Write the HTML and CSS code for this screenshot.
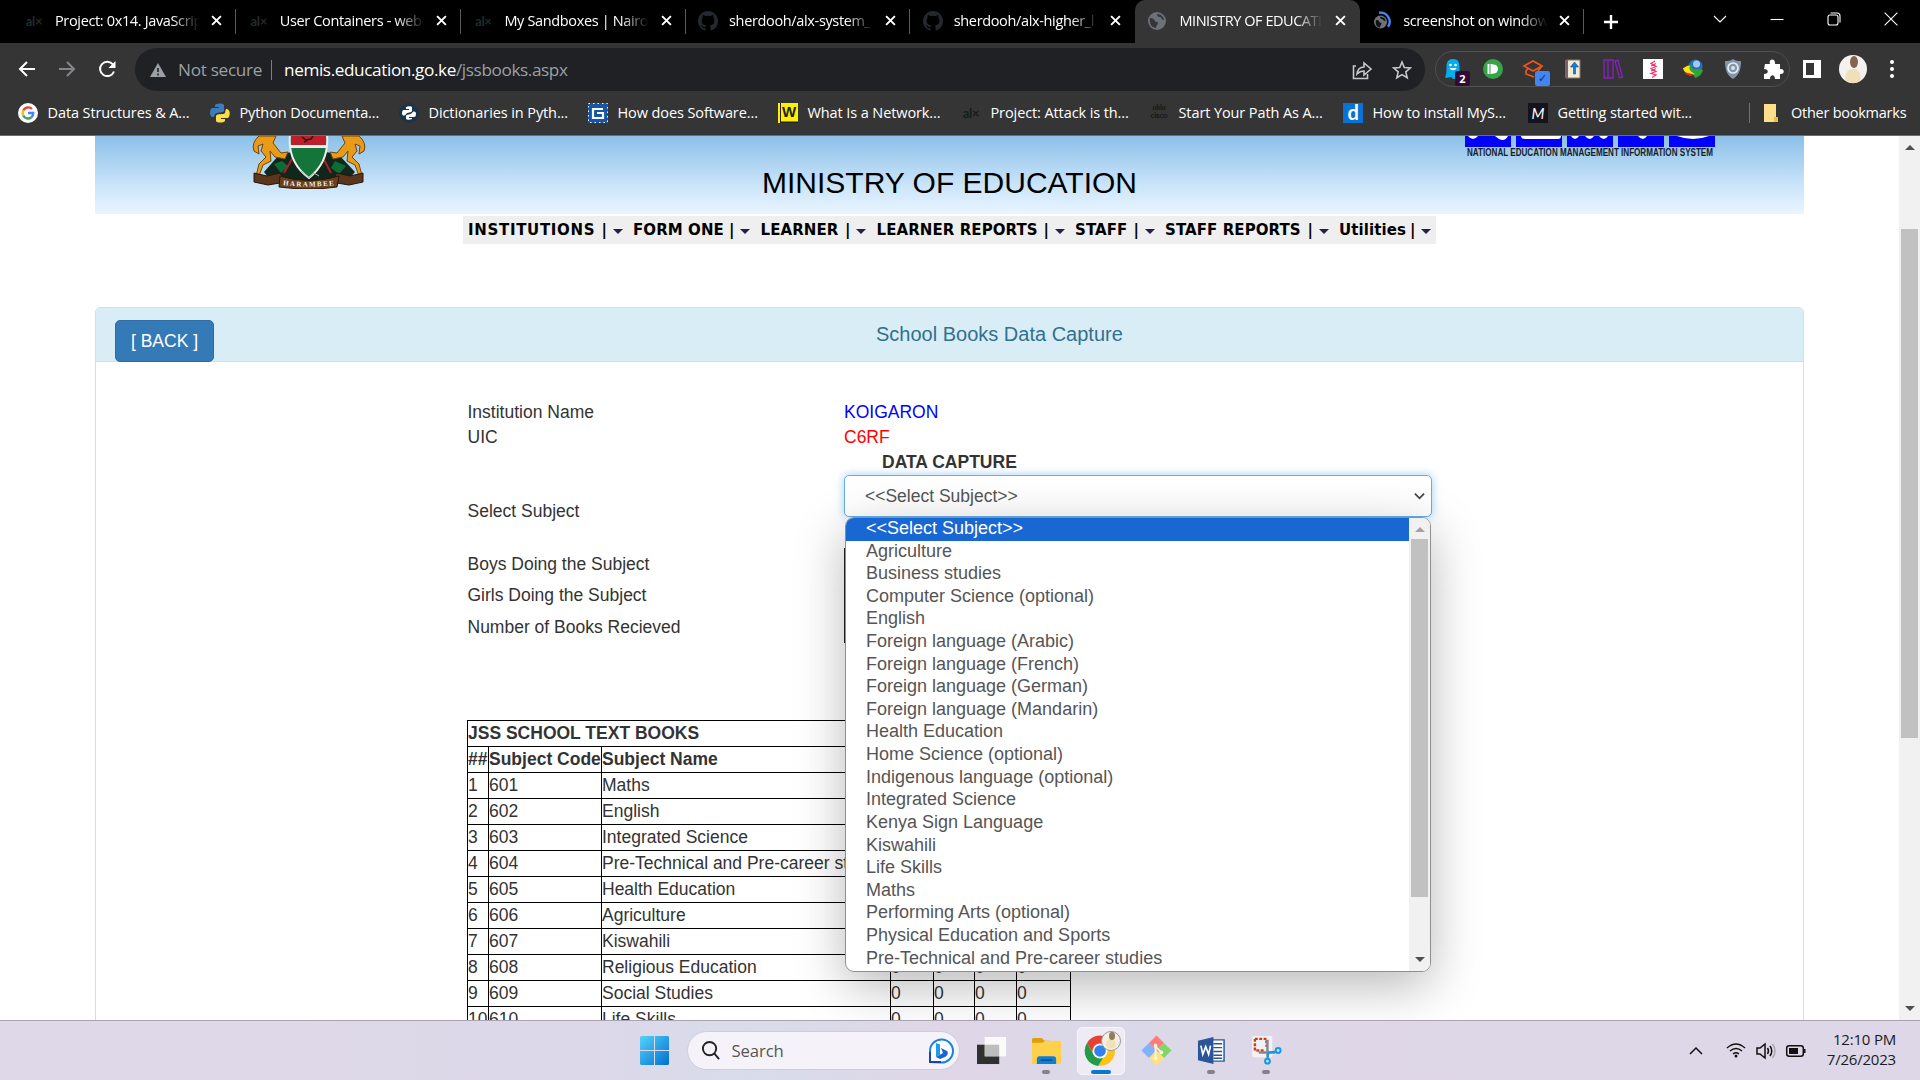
FILE: index.html
```html
<!DOCTYPE html>
<html lang="en">
<head>
<meta charset="utf-8">
<title>MINISTRY OF EDUCATION</title>
<link rel="stylesheet" href="styles.css">
</head>
<body>
<header class="browser">
  <div class="tabs">
    <div class="tab"><span class="fav alx">al×</span><span class="tab-title">Project: 0x14. JavaScrip</span><svg class="close" viewBox="0 0 10 10"><path d="M1 1l8 8M9 1l-8 8"/></svg></div>
    <div class="tab"><span class="fav alx">al×</span><span class="tab-title">User Containers - web-</span><svg class="close" viewBox="0 0 10 10"><path d="M1 1l8 8M9 1l-8 8"/></svg></div>
    <div class="tab"><span class="fav alx">al×</span><span class="tab-title">My Sandboxes | Nairo</span><svg class="close" viewBox="0 0 10 10"><path d="M1 1l8 8M9 1l-8 8"/></svg></div>
    <div class="tab"><svg class="fav" viewBox="0 0 16 16"><path fill="#24292f" d="M8 0C3.58 0 0 3.58 0 8c0 3.54 2.29 6.53 5.47 7.59.4.07.55-.17.55-.38v-1.49c-2.01.37-2.53-.49-2.69-.94-.09-.23-.48-.94-.82-1.13-.28-.15-.68-.52-.01-.53.63-.01 1.08.58 1.23.82.72 1.21 1.87.87 2.33.66.07-.52.28-.87.51-1.07-1.78-.2-3.64-.89-3.64-3.95 0-.87.31-1.59.82-2.15-.08-.2-.36-1.02.08-2.12 0 0 .67-.21 2.2.82a7.6 7.6 0 0 1 4 0c1.53-1.04 2.2-.82 2.2-.82.44 1.1.16 1.92.08 2.12.51.56.82 1.27.82 2.15 0 3.07-1.87 3.75-3.65 3.95.29.25.54.73.54 1.48v2.2c0 .21.15.46.55.38A8 8 0 0 0 16 8c0-4.42-3.58-8-8-8z"/></svg><span class="tab-title">sherdooh/alx-system_</span><svg class="close" viewBox="0 0 10 10"><path d="M1 1l8 8M9 1l-8 8"/></svg></div>
    <div class="tab before-active"><svg class="fav" viewBox="0 0 16 16"><path fill="#24292f" d="M8 0C3.58 0 0 3.58 0 8c0 3.54 2.29 6.53 5.47 7.59.4.07.55-.17.55-.38v-1.49c-2.01.37-2.53-.49-2.69-.94-.09-.23-.48-.94-.82-1.13-.28-.15-.68-.52-.01-.53.63-.01 1.08.58 1.23.82.72 1.21 1.87.87 2.33.66.07-.52.28-.87.51-1.07-1.78-.2-3.64-.89-3.64-3.95 0-.87.31-1.59.82-2.15-.08-.2-.36-1.02.08-2.12 0 0 .67-.21 2.2.82a7.6 7.6 0 0 1 4 0c1.53-1.04 2.2-.82 2.2-.82.44 1.1.16 1.92.08 2.12.51.56.82 1.27.82 2.15 0 3.07-1.87 3.75-3.65 3.95.29.25.54.73.54 1.48v2.2c0 .21.15.46.55.38A8 8 0 0 0 16 8c0-4.42-3.58-8-8-8z"/></svg><span class="tab-title">sherdooh/alx-higher_l</span><svg class="close" viewBox="0 0 10 10"><path d="M1 1l8 8M9 1l-8 8"/></svg></div>
    <div class="tab active"><svg class="fav" viewBox="0 0 20 20"><circle cx="10" cy="10" r="9" fill="#6d7278"/><path fill="#35363a" d="M3 7c3 0 4 1 5 3s3 0 3 2-2 2-2 5c-4 0-7-4-6-10zM10 3c0 2 1 3 3 3s1 3 4 3c0-3-3-6-7-6z"/></svg><span class="tab-title">MINISTRY OF EDUCATI</span><svg class="close" viewBox="0 0 10 10"><path d="M1 1l8 8M9 1l-8 8"/></svg></div>
    <div class="tab last"><svg class="fav" viewBox="0 0 20 20"><circle cx="8.500" cy="11" r="6.500" fill="#6d7278"/><path fill="#111" d="M4 9c2 0 3 .5 3.500 2s2 0 2 1.500-1.500 1.500-1.500 4c-3 0-5-3-4-7.500zM8 6c0 1.500 1 2 2 2s1 2 3.500 2c0-2-2-4.500-5.500-4z"/><path d="M7 1.800a9 9 0 0 1 9 14" fill="none" stroke="#4285f4" stroke-width="2.400"/></svg><span class="tab-title">screenshot on window</span><svg class="close" viewBox="0 0 10 10"><path d="M1 1l8 8M9 1l-8 8"/></svg></div>
    <svg class="newtab" viewBox="0 0 16 16"><path d="M8 1v14M1 8h14" stroke="#fff" stroke-width="2.400"/></svg>
    <div class="window-controls">
      <svg viewBox="0 0 14 14"><path d="M1 4l6 6 6-6"/></svg>
      <svg viewBox="0 0 14 14"><path d="M.5 7.500h13"/></svg>
      <svg viewBox="0 0 14 14"><rect x="1" y="3" width="10" height="10" rx="2"/><path d="M3.500 1h6.500a3 3 0 0 1 3 3v6.500"/></svg>
      <svg viewBox="0 0 14 14"><path d="M.6.600l12.800 12.800M13.400.6L.6 13.400"/></svg>
    </div>
  </div>
  <div class="toolbar">
    <svg class="nav-ic" viewBox="0 0 18 18"><path d="M17 9H2M9 2L2 9l7 7" stroke="#fff"/></svg>
    <svg class="nav-ic" viewBox="0 0 18 18"><path d="M1 9h15M9 2l7 7-7 7" stroke="#85868a"/></svg>
    <svg class="nav-ic" viewBox="0 0 18 18"><path d="M16 11.500A7.200 7.200 0 1 1 15 4.500" stroke="#fff"/><path d="M17.500 1v7h-7z" fill="#fff"/></svg>
    <div class="omnibox">
      <svg class="warn" viewBox="0 0 16 14"><path d="M8 0l8 14H0z" fill="#9aa0a6"/><path d="M8 5v4M8 10.500v2" stroke="#202124" stroke-width="1.600"/></svg>
      <span class="insecure">Not secure</span><i class="bar"></i>
      <span class="url"><b>nemis.education.go.ke</b>/jssbooks.aspx</span>
      <svg class="share" viewBox="0 0 20 20"><path d="M4 6H1.500v12.500h14V14M5 14c.5-4 3-7 7-7V3l7 6-7 6v-4c-3 0-5 1-7 3z"/></svg>
      <svg class="star" viewBox="0 0 20 20"><path d="M10 2l2.300 5.500 6 .5-4.500 3.900 1.400 5.900-5.200-3.200-5.200 3.200 1.400-5.900L1.700 8l6-.5z"/></svg>
    </div>
    <div class="extensions">
      <span class="ext"><svg viewBox="0 0 20 20"><path fill="#00aef0" d="M10 0c5 0 6.500 3 6.500 8 0 6 0 8 1 10-2 1-2.500-.5-3.500-.5S13 20 11 20s-2-2-4-2-3 2-5 0c1.500-3 1.500-5 1.500-10S5 0 10 0z"/><circle cx="7.500" cy="6" r="1.300" fill="#fff"/><circle cx="12.500" cy="6" r="1.300" fill="#fff"/><path d="M6.500 9c1 3 6 3 7 0z" fill="#fff"/></svg><em class="badge plum">2</em></span>
      <span class="ext"><svg viewBox="0 0 20 20"><circle cx="10" cy="10" r="10" fill="#37a34a"/><path d="M5.500 5v10M8.500 5v10" stroke="#fff" stroke-width="2"/><path d="M8.500 5.500h2a4.500 4.500 0 0 1 0 9h-2z" fill="#fff"/></svg></span>
      <span class="ext"><svg viewBox="0 0 20 20" fill="none" stroke="#f0551d" stroke-width="1.700"><path d="M1 7l9-5 9 5-9 5zM5 9.500L3 12v3l8 3M19 7l-4 5"/></svg><em class="badge blue">✓</em></span>
      <span class="ext"><svg viewBox="0 0 20 20"><path fill="#f3ead3" stroke="#8c756b" d="M3 1h14v18H3z"/><path fill="#80616a" d="M2 1h3v18H2z"/><path d="M11.500 3l4 5h-3v7h-2V8h-3z" fill="#127dda" stroke="#174e83" stroke-width=".6"/></svg></span>
      <span class="ext"><svg viewBox="0 0 20 20" fill="none" stroke="#8b20c2" stroke-width="1.300"><path d="M1 1h4v18H1zM5 1h5v18H5zM12 2l3-.8 4.500 16.800-3 .8z"/></svg></span>
      <span class="ext"><svg viewBox="0 0 20 20"><path fill="#fff" d="M0 0h20v20H0z"/><path d="M12 2L8 4.500l5 3-5 2 5 3-5 2 5 1.500-4 2.500M8 7l5-2.500M8 12l5-2.500" fill="none" stroke="#f0346c" stroke-width="1.300"/></svg></span>
      <span class="ext"><svg viewBox="0 0 20 20"><circle cx="12.500" cy="7.500" r="7" fill="#286eb6"/><circle cx="13.500" cy="5" r="3.500" fill="#a5c8ec"/><path d="M4 7c1 5 4 5 6 8l2 4c4-1 7-4 8-8-5-2-11 2-12-5z" fill="#2fa538"/><path d="M0 9c3 0 3-3 7-2-2 3 1 6 5 8-6 2-11-1-12-6z" fill="#ffe11a"/><path d="M1 12c2 2 5 2.500 9 3l-1 2c-4 0-7-2-8-5z" fill="#d72d20"/></svg></span>
      <span class="ext"><svg viewBox="0 0 20 20"><path d="M10 0c3 2 5 2 8 2 0 9-2 14-8 18C4 16 2 11 2 2c3 0 5 0 8-2z" fill="#8395a8"/><circle cx="10" cy="9" r="5" fill="none" stroke="#e5edf5" stroke-width="1.700"/><circle cx="10" cy="9" r="2" fill="#d8e3ee"/></svg></span>
      <span class="ext"><svg viewBox="0 0 20 20"><path fill="#fff" d="M2 5h5c-2-6 6-6 5 0h5v5c5-1 5 6 0 5v5h-5c0-5-5-5-5 0H1v-5c5 0 5-5 0-5z"/></svg></span>
    </div>
    <svg class="side" viewBox="0 0 18 18"><path d="M1.500 1.500h15v15h-15z" fill="none" stroke="#fff" stroke-width="3"/><path d="M11 1h6v16h-6z" fill="#fff"/></svg>
    <svg class="avatar" viewBox="0 0 28 28"><circle cx="14" cy="14" r="14" fill="#f4f1ee"/><path d="M7 26c-2-8 2-12 7-12s9 4 7 12c-4 3-10 3-14 0z" fill="#eee0b9"/><ellipse cx="15" cy="7" rx="4" ry="6" fill="#85654f"/></svg>
    <svg class="dots" viewBox="0 0 4 18"><circle cx="2" cy="2" r="2"/><circle cx="2" cy="9" r="2"/><circle cx="2" cy="16" r="2"/></svg>
  </div>
  <div class="bookmarks">
    <span class="bm"><svg viewBox="0 0 20 20"><circle cx="10" cy="10" r="10" fill="#fff"/><g fill="none" stroke-width="2.400"><path d="M14 6a5.500 5.500 0 0 0-8.800 1.500" stroke="#ea4335"/><path d="M5.200 7.500a5.500 5.500 0 0 0 0 5" stroke="#fbbc05"/><path d="M5.200 12.500a5.500 5.500 0 0 0 8 2" stroke="#34a853"/><path d="M13.200 14.500a5.500 5.500 0 0 0 2-4.500H10" stroke="#4285f4"/></g></svg>Data Structures &amp; A...</span>
    <span class="bm"><svg viewBox="0 0 20 20"><path fill="#3c7ebb" d="M5 2c2-2 8-2 9 0v6c0 2-8 1-9 3-1 3-1 3-3 3-3-2-2-8 0-9h7V4H5z"/><path fill="#ffdc4a" d="M15 18c-2 2-8 2-9 0v-5c1-3 8-1 9-3 1-3 0-4 2-4 4 1 3 8 1 9h-7v1h4z"/></svg>Python Documenta...</span>
    <span class="bm"><svg viewBox="0 0 20 20"><circle cx="10" cy="10" r="10" fill="#1c3448"/><path d="M7 4c2-1 5-1 6 0v4c0 2-5 1-6 3-1 2-3 2-4 0 0-4 1-4 3-4h4V6H7zM13 16c-2 1-5 1-6 0v-3c0-2 5-1 6-3 1-2 3-2 4 0 0 4-1 4-3 4h-4v1h3z" fill="#fff"/></svg>Dictionaries in Pyth...</span>
    <span class="bm"><svg viewBox="0 0 20 20"><path fill="#1656a7" d="M0 0h20v20H0z"/><path d="M.5.5h19v19H.5z" fill="none" stroke="#fff" stroke-dasharray="1.500 3"/><path d="M15 6H5v9h10v-5H9" fill="none" stroke="#fff" stroke-width="2.200"/></svg>How does Software...</span>
    <span class="bm"><i class="logo yellow">W</i>What Is a Network...</span>
    <span class="bm"><i class="logo alx dark">al×</i>Project: Attack is th...</span>
    <span class="bm"><i class="logo cisco">ıılılıı<br>cisco</i>Start Your Path As A...</span>
    <span class="bm"><i class="logo digital">d</i>How to install MyS...</span>
    <span class="bm"><i class="logo mm">M</i>Getting started wit...</span>
    <i class="bm-sep"></i>
    <span class="bm"><svg viewBox="0 0 20 20"><path fill="#ffe08a" d="M3 1h12v13h2v5H3z"/><path fill="#ecbc45" d="M13 14h4v5h-4z"/></svg>Other bookmarks</span>
  </div>
</header>

<div class="viewport">
  <main class="page">
    <div class="banner">
      <svg class="crest" viewBox="0 0 116 53"><path d="M13 36L28 19q30-9 60 0l16 17-8 9H20z" fill="#12271c"/><g fill="#e79b19" stroke="#70430b" stroke-width="1"><path d="M8 0h17l-3 7 8 10 7-1-3 7-10-2-5-6 1 10-8 4-4 11H5l3-12 7-7-5-6 2-7-5 2 1 8-5-3q-3-8 5-15z"/><path d="M108 0H91l3 7-8 10-7-1 3 7 10-2 5-6-1 10 8 4 4 11h3l-3-12-7-7 5-6-2-7 5 2-1 8 5-3q3-8-5-15z"/></g><path d="M23 28l8-3 6 5-7 7zM84 25l11 5-7 8-8-6z" fill="#0c6c35"/><path d="M33 37l24-42M80 37L58-5" stroke="#b11d2b" stroke-width="2"/><path d="M39-1h37c2 22-8 35-18 43C47 34 37 20 39-1z" fill="#14753a" stroke="#eee" stroke-width="2"/><path d="M40-1h35v10H40z" fill="#bd1f2b"/><path d="M40 9h36v3H40z" fill="#eee"/><path d="M51 1l4 3 5-1 2-3M53 6l4-2" fill="none" stroke="#301319" stroke-width="1.500"/><path d="M50 35l8 7 5-5 5 3" stroke="#bbb" fill="none"/><path d="M3 37l13 3 13-3 6 9-18 3-14-3zM112 37l-13 3-13-3-6 9 18 3 14-3z" fill="#5b351c" stroke="#281608"/><path d="M29 40q29 9 59 0l-2 11q-27 4-58 0z" fill="#68401f" stroke="#281608"/><path id="ribbon" d="M32 49q26 3 53 0" fill="none"/><text class="motto"><textPath href="#ribbon" textLength="51">HARAMBEE</textPath></text></svg>
      <h1>MINISTRY OF EDUCATION</h1>
      <svg class="nemis" viewBox="0 0 250 22"><g fill="#00f"><path d="M0 0h46v11H0zM51 0h46v11H51zM102 0h46v11h-46zM153 0h46v11h-46zM204 0h46v11h-46z"/></g><g fill="#fff"><path d="M3 0h10q-5 6-10 0zM30 0h13q-3 6-9 3zM56 0h40q0 3-3 3H60q-4 0-4-3zM106 0h8q-4 6-8 0zM120 0h9q-4 6-9 0zM134 0h9q-4 6-9 0zM173 0h9q-4 6-9 0zM212 0h32q-16 6-32 0z"/></g><text x="2" y="20" textLength="246" lengthAdjust="spacingAndGlyphs">NATIONAL EDUCATION MANAGEMENT INFORMATION SYSTEM</text></svg>
    </div>
    <nav class="menu">
      <a class="institutions"><span>INSTITUTIONS</span><span>|</span><i></i></a><a><span>FORM ONE</span><span>|</span><i></i></a><a><span>LEARNER</span><span>|</span><i></i></a><a><span>LEARNER REPORTS</span><span>|</span><i></i></a><a><span>STAFF</span><span>|</span><i></i></a><a><span>STAFF REPORTS</span><span>|</span><i></i></a><a class="utilities"><span>Utilities</span><span>|</span><i></i></a>
    </nav>
    <section class="panel">
      <div class="panel-head"><button class="back">[ BACK ]</button><h2>School Books Data Capture</h2></div>
      <div class="panel-body">
        <div class="form">
          <div class="row"><label>Institution Name</label><span class="name">KOIGARON</span></div>
          <div class="row"><label>UIC</label><span class="uic">C6RF</span></div>
          <div class="row"><label></label><strong class="caption">DATA CAPTURE</strong></div>
          <div class="row select-row"><label>Select Subject</label>
            <div class="select"><span>&lt;&lt;Select Subject&gt;&gt;</span><svg viewBox="0 0 12 8"><path d="M1 1.500l5 5 5-5"/></svg>
              <div class="dropdown">
                <ul>
                  <li class="selected">&lt;&lt;Select Subject&gt;&gt;</li><li>Agriculture</li><li>Business studies</li><li>Computer Science (optional)</li><li>English</li><li>Foreign language (Arabic)</li><li>Foreign language (French)</li><li>Foreign language (German)</li><li>Foreign language (Mandarin)</li><li>Health Education</li><li>Home Science (optional)</li><li>Indigenous language (optional)</li><li>Integrated Science</li><li>Kenya Sign Language</li><li>Kiswahili</li><li>Life Skills</li><li>Maths</li><li>Performing Arts (optional)</li><li>Physical Education and Sports</li><li>Pre-Technical and Pre-career studies</li>
                </ul>
                <div class="scroll inner"><i class="up"></i><b></b><i class="down"></i></div>
              </div>
            </div>
          </div>
          <div class="row field"><label>Boys Doing the Subject</label><span class="input"></span></div>
          <div class="row field"><label>Girls Doing the Subject</label><span class="input"></span></div>
          <div class="row field last-field"><label>Number of Books Recieved</label><span class="input"></span></div>
        </div>
        <table class="books">
          <colgroup><col class="c-no"><col class="c-code"><col class="c-name"><col class="c-a"><col class="c-b"><col class="c-c"><col class="c-d"></colgroup>
          <tr><th colspan="7">JSS SCHOOL TEXT BOOKS</th></tr>
          <tr><th>##</th><th>Subject Code</th><th>Subject Name</th><th></th><th></th><th></th><th></th></tr>
          <tr><td>1</td><td>601</td><td>Maths</td><td></td><td></td><td></td><td></td></tr>
          <tr><td>2</td><td>602</td><td>English</td><td></td><td></td><td></td><td></td></tr>
          <tr><td>3</td><td>603</td><td>Integrated Science</td><td></td><td></td><td></td><td></td></tr>
          <tr><td>4</td><td>604</td><td>Pre-Technical and Pre-career studies</td><td></td><td></td><td></td><td></td></tr>
          <tr><td>5</td><td>605</td><td>Health Education</td><td></td><td></td><td></td><td></td></tr>
          <tr><td>6</td><td>606</td><td>Agriculture</td><td></td><td></td><td></td><td></td></tr>
          <tr><td>7</td><td>607</td><td>Kiswahili</td><td></td><td></td><td></td><td></td></tr>
          <tr><td>8</td><td>608</td><td>Religious Education</td><td>0</td><td>0</td><td>0</td><td>0</td></tr>
          <tr><td>9</td><td>609</td><td>Social Studies</td><td>0</td><td>0</td><td>0</td><td>0</td></tr>
          <tr><td>10</td><td>610</td><td>Life Skills</td><td>0</td><td>0</td><td>0</td><td>0</td></tr>
        </table>
      </div>
    </section>
  </main>
  <div class="scroll outer"><i class="up"></i><b></b><i class="down"></i></div>
</div>

<footer class="taskbar">
  <div class="apps">
    <svg class="start" viewBox="0 0 29 29"><defs><linearGradient id="win" x1="0" y1="0" x2="1" y2="1"><stop stop-color="#55d3fb"/><stop offset="1" stop-color="#0070d0"/></linearGradient></defs><path fill="url(#win)" d="M1 0h13v14H0V1zM15 0h13l1 1v13H15zM0 15h14v14H1l-1-1zM15 15h14v13l-1 1H15z"/></svg>
    <div class="search"><svg class="mag" viewBox="0 0 20 20"><circle cx="9" cy="8" r="7"/><path d="M14 13l5 6"/></svg><span>Search</span><svg class="bing" viewBox="0 0 26 26"><path d="M2 24V13A11.500 11.500 0 1 1 13 24.500z" fill="#fff" stroke="#1684e0" stroke-width="2"/><path d="M2 14v10h11" fill="none" stroke="#1b41b5" stroke-width="2"/><path d="M8 5l4 1.500v10L8 19z" fill="#1e9bea"/><path d="M13 10l6 3c2 2 0 5-2 6l-5 2-4-2 7-4z" fill="#1764d2"/></svg></div>
    <span class="app"><svg viewBox="0 0 30 30"><path fill="#30302f" d="M0 9h23v20H0z"/><path fill="#fafafa" d="M8 1h22v20H8z"/><path fill="#bdbdbd" d="M8 9h15v12H8z"/></svg></span>
    <span class="app run"><svg viewBox="0 0 30 30"><path fill="#dda009" d="M1 2h9l3 3h5v5H0V3z"/><path fill="#ffd04b" d="M0 7h11l3-2h15l1 1v23H0z"/><path fill="#117dd4" d="M5 29v-5q0-3 3-3h14q3 0 3 3v5z"/><path stroke="#064f92" stroke-width="1.500" d="M9 25h12"/></svg></span>
    <span class="app current"><svg viewBox="0 0 36 36"><circle cx="15" cy="20" r="15" fill="#fcc419"/><path fill="#e44235" d="M2 12a15 15 0 0 1 26 0l-13 1-6 10z"/><path fill="#249b4b" d="M2 12l7 12 9 3-5 8A15 15 0 0 1 2 12z"/><circle cx="15" cy="20" r="7.500" fill="#fff"/><circle cx="15" cy="20" r="5.800" fill="#347fed"/><circle cx="26" cy="10" r="9.500" fill="#f3eee2" stroke="#999"/><path d="M21 15q0-7 5-7t5 7q-5 5-10 0z" fill="#efe2b4"/><ellipse cx="27" cy="5" rx="3" ry="4" fill="#93795f"/></svg></span>
    <span class="app"><svg viewBox="0 0 30 30"><g transform="rotate(45 15 15)"><path fill="#7eb4fa" d="M4 15h11v11H4z"/><path fill="#ff7b79" d="M4 4h11v11H4z"/><path fill="#82d567" d="M15 4h11v11H15z"/><path fill="#ffe378" d="M15 15h11v11H15z"/></g><path d="M14 8v16M14 11l6 6" stroke="#f7f2dd" stroke-width="2"/><circle cx="14" cy="10" r="2" fill="#f7f2dd"/><circle cx="20" cy="17" r="2" fill="#f7f2dd"/><circle cx="14" cy="23" r="2" fill="#f7f2dd"/></svg></span>
    <span class="app run"><svg viewBox="0 0 30 30"><path fill="#fff" stroke="#2a5699" stroke-width="1.500" d="M14 4h14v22H14z"/><path d="M17 8h9M17 12h9M17 16h9M17 20h9M17 23h9" stroke="#2a5699" stroke-width="1.500"/><path fill="#2a5699" d="M1 5l16-4v28L1 25z"/><path d="M4 10l2 9 3-8 3 8 2-9" fill="none" stroke="#fff" stroke-width="1.700"/></svg></span>
    <span class="app run"><svg viewBox="0 0 30 30"><rect width="21" height="22" fill="#f2f2f4" rx="2"/><path d="M3 3h12v8M3 3v12h9" fill="none" stroke="#d33c13" stroke-width="2.500" stroke-dasharray="3 1.500"/><path d="M16 4v18M7 17h17" stroke="#7f8995" stroke-width="2.500"/><g fill="none" stroke="#1199e6" stroke-width="2"><circle cx="27" cy="15" r="2.500"/><circle cx="16" cy="26" r="2.500"/><path d="M17 17l8-1M17 18l-1 6"/></g></svg></span>
  </div>
  <div class="tray">
    <svg class="chev" viewBox="0 0 14 8"><path d="M1 7l6-6 6 6"/></svg>
    <svg class="wifi" viewBox="0 0 20 15"><path d="M1 5q9-8 18 0M4 8q6-5 12 0M7 11q3-2.500 6 0"/><circle cx="10" cy="13" r="1.500" fill="#111" stroke="none"/></svg>
    <svg class="volume" viewBox="0 0 20 16"><path d="M1 5h3l5-4v14l-5-4H1zM11.500 5q2 3 0 6M14 3q3.500 5 0 10"/><path d="M16.500 1q5 7 0 14" stroke="#aaa3b1"/></svg>
    <svg class="battery" viewBox="0 0 20 12"><rect x=".7" y=".7" width="16.600" height="10.600" rx="2.500"/><path d="M3 3h9v6H3z" fill="#111" stroke="none"/><path d="M18.800 4v4"/></svg>
    <div class="clock">12:10 PM<br>7/26/2023</div>
  </div>
</footer>
</body>
</html>
```
FILE: styles.css
```css
* { box-sizing: border-box; }
body { margin: 0; width: 1920px; height: 1080px; overflow: hidden; display: flex; flex-direction: column; background: #fff; font-family: "Liberation Sans", Arial, sans-serif; font-size: 17.5px; line-height: 25px; color: #333; }
svg { display: block; flex: none; overflow: visible; }
i, em { font-style: normal; }

/* Browser chrome */
.browser { height: 136px; flex: none; background: #353535; color: #fff; font-family: "Open Sans", "Noto Sans", sans-serif; border-bottom: 1px solid #6b6b6b; }
.tabs { height: 43px; background: #000; display: flex; align-items: center; padding-left: 11.500px; }
.tab { width: 224.700px; height: 43px; display: flex; align-items: center; padding: 0 14px 2px 12.500px; position: relative; flex: none; }
.tab::after { content: ""; position: absolute; right: 0; top: 9px; width: 1px; height: 25px; background: #5a5a5a; }
.before-active::after, .active::after { display: none; }
.tab.active { background: #353535; border-radius: 10px 10px 0 0; }
.fav { width: 20px; height: 20px; flex: none; }
.alx { font: bold 13px/20px Lato, sans-serif; color: #222b2c; letter-spacing: -.3px; text-align: center; }
.tab-title { flex: none; width: 146px; margin-left: 11px; font-size: 14.500px; letter-spacing: -.35px; white-space: nowrap; overflow: hidden; -webkit-mask-image: linear-gradient(90deg, #000 80%, transparent 99%); mask-image: linear-gradient(90deg, #000 80%, transparent 99%); }
.active .tab-title { letter-spacing: -.45px; margin-left: 12px; width: 145px; }
.close { width: 11px; height: 11px; margin-left: auto; fill: none; stroke: #fff; stroke-width: 1.800; }
.newtab { width: 16px; height: 16px; margin-left: 19px; }
.window-controls { display: flex; gap: 43px; margin-left: 94px; padding-bottom: 6px; }
.window-controls svg { width: 14px; height: 14px; fill: none; stroke: #fff; stroke-width: 1.100; }

.toolbar { height: 48px; padding: 5px 0 0 18px; display: flex; align-items: center; }
.nav-ic { width: 18px; height: 18px; margin: -1px 22px 0 0; fill: none; stroke-width: 2; }
.nav-ic:nth-child(3) { margin-right: 19px; }
.omnibox { width: 1290px; height: 43px; flex: none; border-radius: 22px; background: #202124; display: flex; align-items: center; padding: 0 13px 0 15px; font-size: 17.200px; margin-right: 10px; }
.warn { width: 16px; height: 14px; }
.insecure { color: #9aa0a6; width: 83px; margin-left: 12px; white-space: nowrap; letter-spacing: -.3px; }
.bar { width: 1px; height: 20px; background: #7b7d81; margin: 0 12px 0 10px; }
.url { color: #9aa0a6; letter-spacing: -.4px; }
.url b { color: #fff; font-weight: 400; }
.share, .star { width: 20px; height: 20px; fill: none; stroke: #c5c7c9; stroke-width: 1.600; }
.share { margin-left: auto; }
.star { margin-left: 20px; }
.extensions { width: 355px; height: 36px; margin-top: -2px; border: 1px solid #505050; border-radius: 18px; display: flex; align-items: center; gap: 20px; padding-left: 7px; flex: none; }
.ext { width: 20px; height: 20px; position: relative; flex: none; }
.ext svg { width: 20px; height: 20px; }
.badge { position: absolute; left: 12px; top: 12px; width: 15px; height: 15px; border-radius: 2px; font: bold 11px/15px "Open Sans", sans-serif; text-align: center; }
.plum { background: #330a35; }
.blue { background: #4285f4; font-family: "DejaVu Sans"; color: #182a52; }
.side { width: 18px; height: 18px; margin: -1px 0 0 13px; }
.avatar { width: 28px; height: 28px; margin: -1px 0 0 18px; }
.dots { width: 4px; height: 18px; margin: -1px 0 0 23px; fill: #fff; }

.bookmarks { height: 44px; padding: 0 0 1px 18px; display: flex; align-items: center; font-size: 14.500px; letter-spacing: -.1px; white-space: nowrap; }
.bm { display: flex; align-items: center; gap: 9.500px; flex: none; width: 189px; }
.bm svg, .logo { width: 20px; height: 20px; flex: none; }
.bm:nth-child(1) { width: 192px; }
.bm:nth-child(4) { width: 190px; }
.bm:nth-child(5) { width: 183px; }
.bm:nth-child(6) { width: 188px; }
.bm:nth-child(7) { width: 194px; }
.bm:nth-child(8) { width: 185px; }
.bm:nth-child(9) { width: 221px; }
.bm:last-child { width: 150px; gap: 10px; letter-spacing: -.25px; }
.bm-sep { width: 1px; height: 20px; background: #707070; margin-right: 11px; }
.logo { text-align: center; }
.dark { color: #141d1e; }
.yellow { background: #fff000; color: #222; font: bold 15px/18px "Liberation Sans"; border-left: 2px solid #fff000; box-shadow: inset 1.500px -2px 0 -.5px #222; }
.cisco { font: bold 8px/8px Lato; color: #141819; letter-spacing: -.2px; }
.digital { background: #0873d4; font: bold 20px/18px Lato; }
.mm { background: #14141e; font: italic 15px/20px Lato; }

/* Web page */
.viewport { flex: 1; min-height: 0; display: flex; overflow: hidden; }
.page { flex: 1; padding: 0 95px; width: 1899px; }
.banner { width: 1709px; height: 78px; background: linear-gradient(#8bc0e8, #cce5fa 65%, #eaf5ff); display: flex; padding-left: 156px; overflow: hidden; }
.crest { width: 116px; height: 53px; overflow: hidden; }
.motto { font: bold 7px "Liberation Serif", serif; fill: #eee; }
h1 { margin: 30px 0 0 395px; width: 378px; font-size: 30px; line-height: 33px; font-weight: 400; color: #000; white-space: nowrap; }
.nemis { width: 250px; height: 22px; margin-left: 325px; }
.nemis text { font: bold 11px "Liberation Sans Narrow", "Liberation Sans", sans-serif; fill: #162027; }
.menu { margin: 2px 0 0 368px; width: 973px; height: 28px; background: #efefef; display: flex; padding-left: 5px; font: bold 15px/29px "DejaVu Sans", Verdana, sans-serif; color: #000; white-space: nowrap; letter-spacing: .08px; }
.menu a { width: 165px; flex: none; display: flex; align-items: center; }
.menu .institutions { letter-spacing: .68px; }
.menu a:nth-child(2) { width: 127.500px; }
.menu a:nth-child(3) { width: 116px; }
.menu a:nth-child(4) { width: 198.500px; }
.menu a:nth-child(5) { width: 90px; }
.menu a:nth-child(6) { width: 174px; }
.menu a:nth-child(7) { width: 92px; }
.menu span:nth-child(2) { margin-left: auto; margin-right: 5.500px; letter-spacing: 0; }
.menu i { border: 5px solid transparent; border-top-color: #20204f; border-bottom: 0; margin: 2px 10.500px 0 0; }
.menu .utilities i { margin-right: 0; }
.panel { margin-top: 63px; width: 1709px; border: 1px solid #bce8f1; border-radius: 5px 5px 0 0; height: 900px; }
.panel-head { height: 54px; background: #d9edf7; border-bottom: 1px solid #bce8f1; display: flex; padding-left: 19px; border-radius: 4px 4px 0 0; }
.back { width: 99px; height: 42px; margin-top: 12px; border: 1px solid #2e6da4; border-radius: 5px; background: #337ab7; color: #fff; font: 17.500px/25px "Liberation Sans"; padding: 0; white-space: nowrap; }
h2 { margin: 14px 0 0 662px; font-size: 20px; line-height: 25px; font-weight: 400; color: #31708f; }
.panel-body { padding: 38px 0 0 371px; }
.form { width: 965px; }
.row { height: 25px; display: flex; align-items: center; white-space: nowrap; }
.row label { width: 377px; padding-left: .5px; flex: none; }
.name { color: #00f; }
.uic { color: #f00; }
.caption { margin-left: 38px; }
.select-row { height: 73px; }
.select { position: relative; align-self: flex-start; width: 588px; height: 42px; border: 1px solid #66afe9; border-radius: 5px; background: #fff; box-shadow: 0 0 10px rgba(102, 175, 233, .6); display: flex; align-items: center; justify-content: space-between; padding: 0 6px 0 20px; color: #555; }
.select svg { width: 11px; height: 8px; fill: none; stroke: #444; stroke-width: 2; }
.dropdown { position: absolute; left: 0; top: 41px; width: 586px; height: 455px; background: #fff; border: 1px solid #8f8f8f; border-radius: 9px; overflow: hidden; display: flex; z-index: 2; }
.select::before { content: ""; position: absolute; left: 0; top: 41px; width: 586px; height: 455px; border-radius: 9px; box-shadow: 0 14px 50px rgba(0, 0, 0, .28); }
.dropdown ul { list-style: none; margin: 0; padding: 0; flex: 1; font-size: 18px; }
.dropdown li { height: 22.610px; line-height: 21px; padding-left: 20px; }
.dropdown .selected { background: #1967d2; color: #fff; }
.scroll { width: 21px; background: #f1f1f1; display: flex; flex-direction: column; align-items: center; flex: none; }
.scroll b { width: 17px; background: #c1c1c1; }
.scroll i { border: 5px solid transparent; }
.scroll .up { border-top: 0; border-bottom-color: #505050; }
.scroll .down { border-bottom: 0; border-top-color: #505050; margin-top: auto; }
.inner .up { margin: 9px 0 7px; border-bottom-color: #a3a3a3; }
.inner b { height: 358px; }
.inner .down { margin-bottom: 9px; }
.outer .up { margin: 9px 0 79px; }
.outer b { height: 509px; }
.outer .down { margin-bottom: 9px; }
.field { height: 31px; }
.field label { padding-top: 1px; }
.last-field { height: 33px; }
.input { width: 240px; height: 100%; border: 2px solid #222; border-bottom-width: 1px; }
.books { margin-top: 77px; width: 604px; table-layout: fixed; border-collapse: collapse; }
.books td, .books th { border: 1px solid #000; padding: 0; height: 26px; line-height: 25px; text-align: left; white-space: nowrap; overflow: hidden; }
.c-no { width: 21px; } .c-code { width: 113px; } .c-name { width: 289px; } .c-a { width: 43px; } .c-b { width: 41px; } .c-c { width: 42px; } .c-d { width: 54px; }

/* Taskbar */
.taskbar { height: 60px; flex: none; position: relative; z-index: 3; border-top: 1px solid #aaa3b3; background: linear-gradient(90deg, #dfd8e8 0, #ddd8e9 30%, #d8dcea 39%, #dfd6e7 50%, #dad9e8 58%, #dfd7e8 70%, #ded7e7); display: flex; justify-content: space-between; color: #1b1b1f; font-family: "Open Sans", sans-serif; }
.apps { display: flex; align-items: center; padding-left: 640px; }
.start { width: 29px; height: 29px; }
.search { margin: 0 7.500px 0 17.500px; width: 273px; height: 39px; border-radius: 20px; background: #f5f3f9; border: 1px solid #d1cada; display: flex; align-items: center; padding: 0 5px 0 13px; font-size: 16.700px; color: #555; letter-spacing: -.1px; }
.mag { width: 19px; height: 19px; fill: none; stroke: #222; stroke-width: 2; margin-right: 12px; }
.bing { width: 26px; height: 26px; margin-left: auto; }
.app { width: 48px; height: 48px; margin-right: 7px; display: flex; align-items: center; justify-content: center; position: relative; }
.app svg { width: 29px; height: 29px; }
.current { background: #efebf5; border: 1px solid #f7f4fa; border-radius: 5px; }
.current svg { width: 36px; height: 36px; margin: -3px 0 0 4px; }
.run::after, .current::after { content: ""; position: absolute; bottom: 1px; width: 8px; height: 4px; border-radius: 2px; background: #85808c; }
.current::after { bottom: 0; width: 20px; background: #0878d4; }
.tray { display: flex; align-items: center; padding-right: 24px; }
.tray svg { fill: none; stroke: #111; stroke-width: 1.500; }
.chev { width: 14px; height: 8px; margin-right: 23px; }
.wifi { width: 20px; height: 15px; margin-right: 10px; }
.volume { width: 20px; height: 16px; margin-right: 10px; }
.battery { width: 20px; height: 12px; }
.clock { width: 90px; margin-top: -4px; text-align: right; font-size: 15px; line-height: 20px; letter-spacing: -.2px; white-space: nowrap; }
```
